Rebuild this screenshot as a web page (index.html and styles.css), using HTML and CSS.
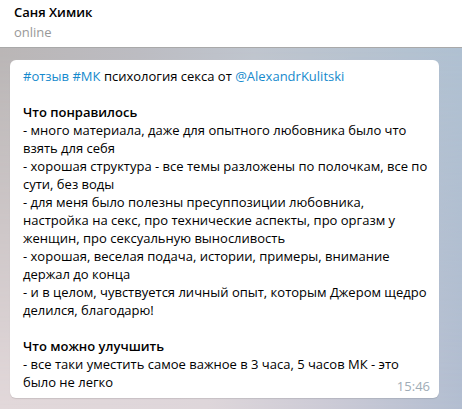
FILE: index.html
```html
<!DOCTYPE html>
<html>
<head>
<meta charset="utf-8">
<link rel="stylesheet" href="styles.css">
</head>
<body>
<div class="app">
  <header class="top">
    <div class="name">Саня Химик</div>
    <div class="status">online</div>
  </header>
  <main class="chat">
    <div class="bubble">
      <div class="text">
        <div class="line"><span class="link">#отзыв</span> <span class="link">#МК</span> психология секса от <span class="link">@AlexandrKulitski</span></div>
        <div class="line">&nbsp;</div>
        <div class="line b">Что понравилось</div>
        <div class="line">- много материала, даже для опытного любовника было что</div>
        <div class="line">взять для себя</div>
        <div class="line">- хорошая структура - все темы разложены по полочкам, все по</div>
        <div class="line">сути, без воды</div>
        <div class="line">- для меня было полезны пресуппозиции любовника,</div>
        <div class="line">настройка на секс, про технические аспекты, про оргазм у</div>
        <div class="line">женщин, про сексуальную выносливость</div>
        <div class="line">- хорошая, веселая подача, истории, примеры, внимание</div>
        <div class="line">держал до конца</div>
        <div class="line">- и в целом, чувствуется личный опыт, которым Джером щедро</div>
        <div class="line">делился, благодарю!</div>
        <div class="line">&nbsp;</div>
        <div class="line b">Что можно улучшить</div>
        <div class="line">- все таки уместить самое важное в 3 часа, 5 часов МК - это</div>
        <div class="line last">было не легко <span class="time">15:46</span></div>
      </div>
    </div>
  </main>
</div>
</body>
</html>
```
FILE: styles.css
```css
* { box-sizing: border-box; }
html, body { margin: 0; padding: 0; }
body {
  width: 462px;
  height: 409px;
  overflow: hidden;
  font-family: "Open Sans", "Noto Sans", sans-serif;
  font-size: 13px;
  color: #000;
}
.app {
  width: 462px;
  height: 409px;
  display: flex;
  flex-direction: column;
}
.top {
  height: 48px;
  flex: none;
  background: #fff;
  border-bottom: 1px solid #a9a9a9;
  padding: 3px 0 0 14px;
}
.name {
  font-weight: 600;
  font-size: 13px;
  line-height: 18px;
  color: #000;
}
.status {
  font-size: 13px;
  line-height: 18px;
  margin-top: 2px;
  color: #999;
}
.chat {
  flex: 1;
  position: relative;
  padding: 12px 23px 0 10px;
  background: linear-gradient(to right, #bab6b6 0%, #bcbcc2 30%, #bfc5ce 55%, #b0c1d2 100%);
}
.chat::before {
  content: "";
  position: absolute;
  inset: 0;
  background: linear-gradient(to right, #e2d8da 0%, #ded6da 45%, #cdcbd6 70%, #b2bdd0 100%);
  -webkit-mask-image: linear-gradient(to bottom, transparent 0%, #000 100%);
  mask-image: linear-gradient(to bottom, transparent 0%, #000 100%);
}
.bubble {
  position: relative;
  width: 429px;
  background: #fff;
  border-radius: 6px;
  padding: 7px 9px 7px 13px;
  box-shadow: 0 1px 1px rgba(0,0,0,0.1);
}
.line {
  line-height: 18px;
  white-space: nowrap;
}
.b { font-weight: 600; }
.link { color: #168acd; }
.last {
  display: flex;
  justify-content: space-between;
  align-items: flex-end;
}
.time {
  color: #a0acb6;
  font-size: 13px;
  line-height: 18px;
  position: relative;
  top: 4px;
}
```
